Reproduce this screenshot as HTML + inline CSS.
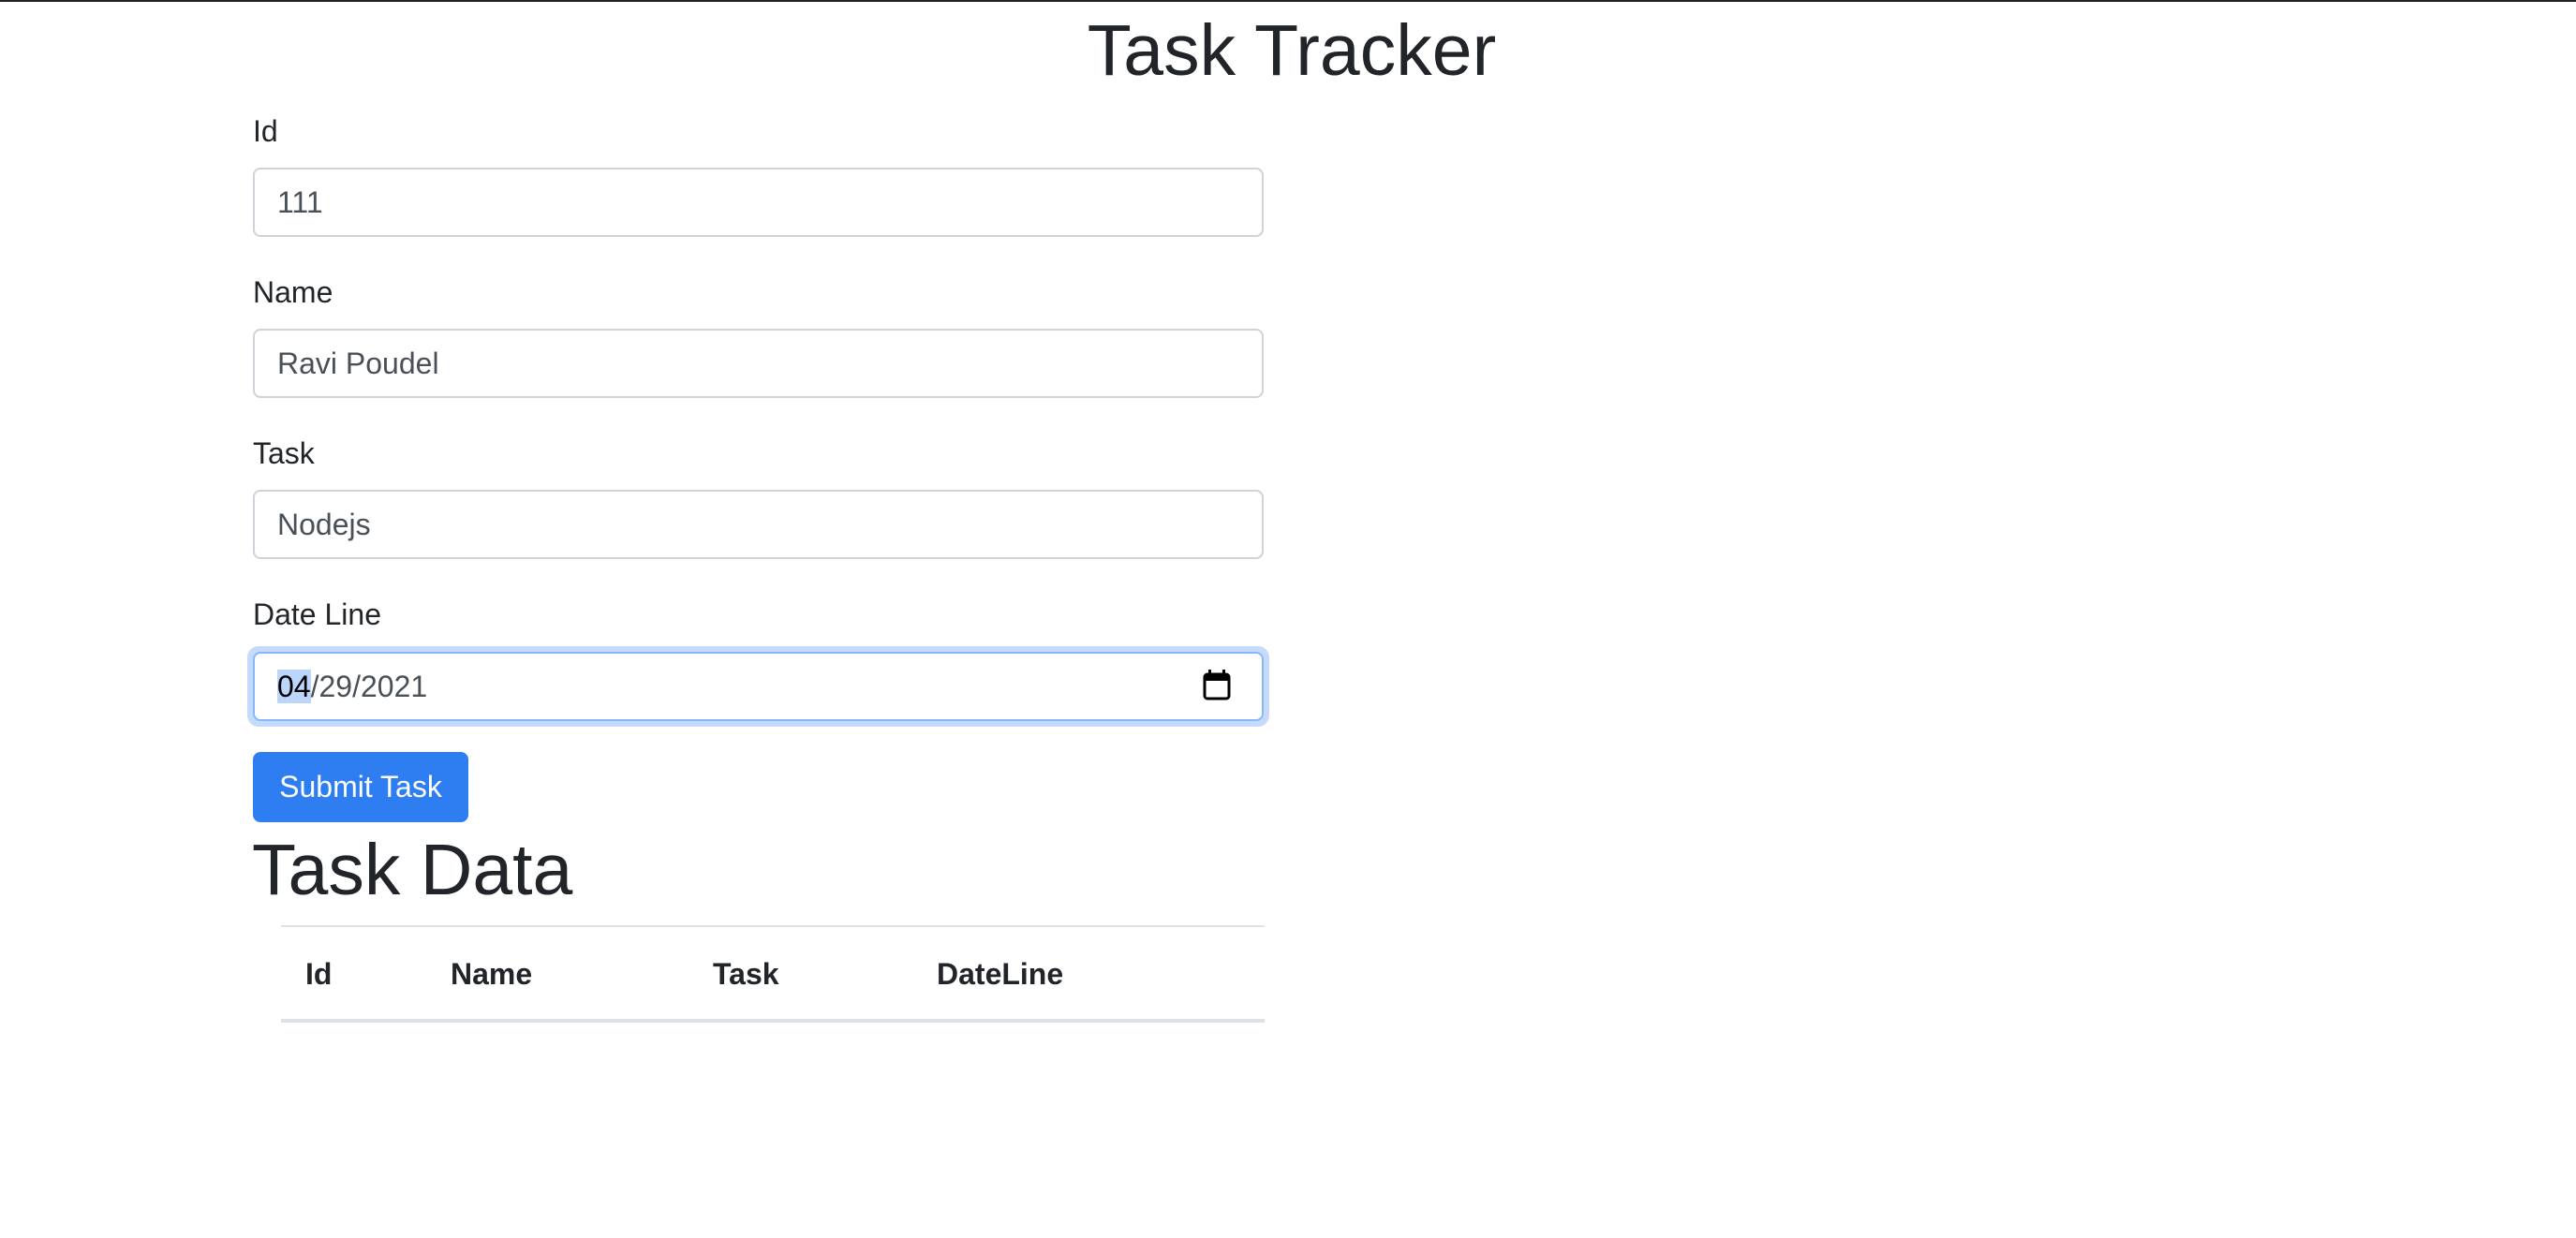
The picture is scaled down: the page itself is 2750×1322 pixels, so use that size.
<!DOCTYPE html>
<html><head><meta charset="utf-8"><style>
body{margin:0;width:2750px;height:1322px;background:#fff;font-family:"Liberation Sans",Arial,sans-serif;color:#212529;position:relative;overflow:hidden;border-top:2px solid #222;box-sizing:border-box}
.a{position:absolute}
h1{margin:0;font-weight:500;font-size:77px;line-height:1;position:absolute}
.lbl{font-size:32px;left:270px}
.inp{left:270px;width:1079px;height:74px;border:2px solid #ced4da;border-radius:8px;box-sizing:border-box;font-size:32px;color:#495057;line-height:70px;padding-left:24px}
</style></head><body>
<h1 style="left:0;width:2758px;text-align:center;top:14px">Task Tracker</h1>
<div class="a lbl" style="top:120px">Id</div>
<div class="a inp" style="top:177px">111</div>
<div class="a lbl" style="top:292px">Name</div>
<div class="a lbl" style="top:464px">Task</div>
<div class="a lbl" style="top:636px">Date Line</div>
<div class="a inp" style="top:349px">Ravi Poudel</div>
<div class="a inp" style="top:521px">Nodejs</div>
<div class="a" style="left:264px;top:688px;width:1091px;height:86px;border-radius:12px;background:#c6dbfb"></div>
<div class="a inp" style="top:694px;border-color:#86b7fe;background:#fff"><span style="background:#bcd6fb;color:#000">04</span>/29/2021</div>
<svg class="a" style="left:1284px;top:713px" width="30" height="33" viewBox="0 0 30 33"><rect x="2" y="5" width="26" height="26" rx="3" fill="none" stroke="#000" stroke-width="3"/><rect x="2" y="5" width="26" height="7" fill="#000"/><rect x="6" y="0" width="3" height="7" fill="#000"/><rect x="21" y="0" width="3" height="7" fill="#000"/></svg>
<div class="a" style="left:270px;top:801px;width:230px;height:75px;background:#2f7ef1;border-radius:8px;color:#fff;font-size:32px;line-height:75px;text-align:center">Submit Task</div>
<h1 style="left:269px;top:889px">Task Data</h1>
<div class="a" style="left:300px;top:986px;width:1050px;height:2px;background:#dee2e6"></div>
<div class="a" style="left:300px;top:1086px;width:1050px;height:4px;background:#dee2e6"></div>
<div class="a" style="top:1020px;font-weight:bold;font-size:32px;left:326px">Id</div>
<div class="a" style="top:1020px;font-weight:bold;font-size:32px;left:481px">Name</div>
<div class="a" style="top:1020px;font-weight:bold;font-size:32px;left:761px">Task</div>
<div class="a" style="top:1020px;font-weight:bold;font-size:32px;left:1000px">DateLine</div>
</body></html>
